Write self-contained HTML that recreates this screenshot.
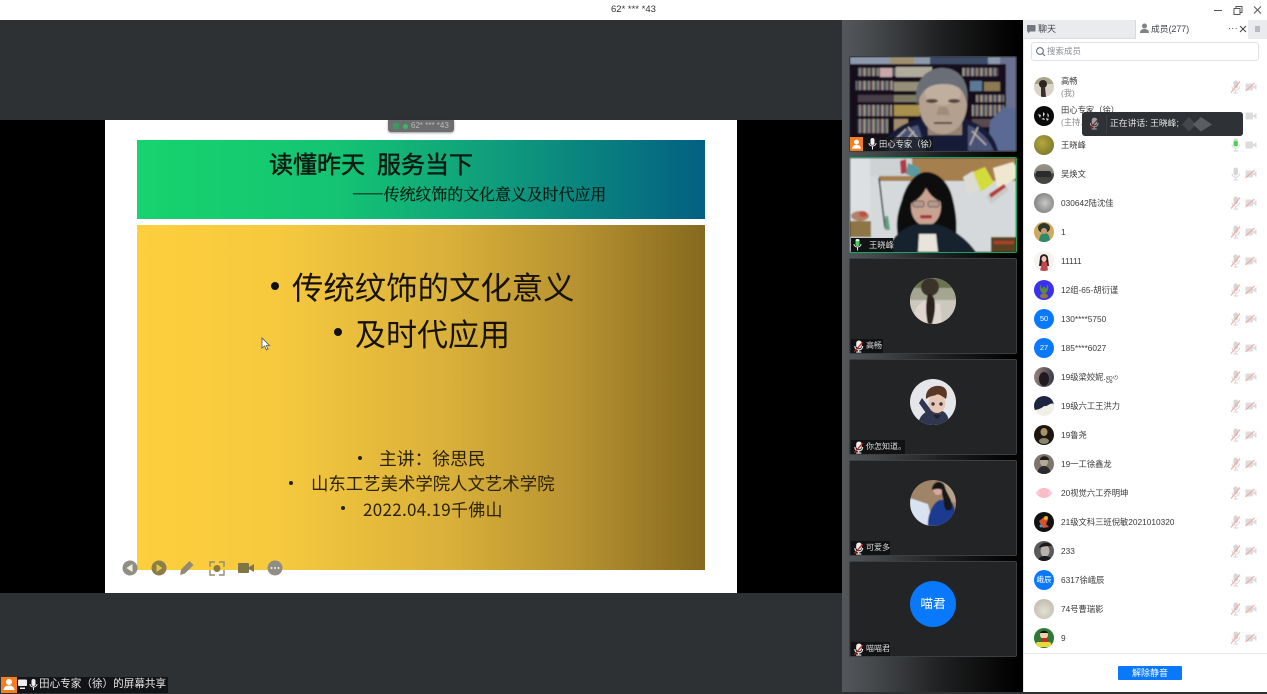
<!DOCTYPE html>
<html lang="zh"><head><meta charset="utf-8"><title>62* *** *43</title>
<style>
html,body{margin:0;padding:0;width:1267px;height:694px;overflow:hidden;background:#2e3134}
body{position:relative;font-family:"Liberation Sans","Noto Sans CJK SC",sans-serif;color:#333}
div,span,svg{position:absolute}
.t{white-space:nowrap;line-height:1}
.tile{left:849px;width:166px;height:94px;background:#222426;border:1px solid #3c3f42;border-radius:2px;overflow:hidden}
.lab{left:1px;background:#101214;height:14px;top:80px;color:#ddd;font-size:8px;line-height:14px;white-space:nowrap}
.n{left:38px;font-size:8.300px;color:#3a3a3a;white-space:nowrap;line-height:10px}
.av{left:11px;width:20px;height:20px;border-radius:50%;overflow:hidden}
.bl{background:#0a78fb;color:#fff;font-size:7.500px;text-align:center;line-height:20px}
.m{left:207px;width:11px;height:14px}
.c{left:222px;width:12px;height:10px}
</style></head><body>
<svg width="0" height="0" style="left:0;top:0">
<symbol id="mm" viewBox="0 0 11 14"><rect x="3.500" y="0.500" width="4.500" height="8" rx="2.200" fill="#d6d6d6"/><path d="M2 6.500c0 5 7.500 5 7.500 0M5.700 10.500v2M3.500 13h4.500" stroke="#d6d6d6" fill="none"/><path d="M1 12.500 10 1.500" stroke="#f7a29b" stroke-width="1"/></symbol>
<symbol id="mu" viewBox="0 0 11 14"><rect x="3.500" y="0.500" width="4.500" height="8" rx="2.200" fill="#d6d6d6"/><path d="M2 6.500c0 5 7.500 5 7.500 0M5.700 10.500v2M3.500 13h4.500" stroke="#d6d6d6" fill="none"/></symbol>
<symbol id="mg" viewBox="0 0 11 14"><rect x="3.500" y="0.500" width="4.500" height="3.500" rx="1.700" fill="#d6d6d6"/><rect x="3.500" y="3" width="4.500" height="5.500" rx="2" fill="#48d455"/><path d="M2 6.500c0 5 7.500 5 7.500 0M5.700 10.500v2M3.500 13h4.500" stroke="#d6d6d6" fill="none"/></symbol>
<symbol id="cm" viewBox="0 0 12 10"><rect x="0.500" y="1.500" width="7.500" height="7" rx="1" fill="#dcdcdc"/><path d="M8 4.500 11.500 2v6L8 5.500z" fill="#dcdcdc"/><path d="M0.500 9 9.500 1" stroke="#f7a29b"/></symbol>
<symbol id="cu" viewBox="0 0 12 10"><rect x="0.500" y="1.500" width="7.500" height="7" rx="1" fill="#dcdcdc"/><path d="M8 4.500 11.500 2v6L8 5.500z" fill="#dcdcdc"/></symbol>
<symbol id="lm" viewBox="0 0 11 14"><rect x="3" y="0.500" width="6" height="8.500" rx="3" fill="#ececec"/><path d="M1.500 6.500c0 5.500 8.500 5.500 8.500 0M5.700 10.500v2M3 13h5.500" stroke="#ececec" stroke-width="1.200" fill="none"/><path d="M1 12.500 10 2.500" stroke="#c8201c" stroke-width="1.300"/></symbol>
<symbol id="pp" viewBox="0 0 16 16"><circle cx="8" cy="5" r="3" fill="#fff"/><path d="M2.500 13c.5-3.500 3-4.500 5.500-4.500s5 1 5.500 4.500z" fill="#fff"/></symbol>
<filter id="b"><feGaussianBlur stdDeviation=".6"/></filter>
<filter id="b2"><feGaussianBlur stdDeviation=".8"/></filter>
<pattern id="books" width="9" height="10" patternUnits="userSpaceOnUse"><rect width="9" height="10" fill="#2b1c2c"/><rect x="0" width="2" height="10" fill="#8e8a7c"/><rect x="2.500" width="1.500" height="10" fill="#5a4a62"/><rect x="4.500" width="2" height="10" fill="#a69a86"/><rect x="7" width="1.500" height="10" fill="#4a5a70"/></pattern>
</svg>

<!-- title bar -->
<div style="left:0;top:0;width:1267px;height:20px;background:#fff"></div>
<div class="t" style="left:611px;top:5px;font-size:9.500px;color:#333">62* *** *43</div>
<svg style="left:1210px;top:2px" width="57" height="16" fill="none" stroke="#555"><path d="M4 8.500h8"/><path d="M24 6.500h6v6h-6zM26 6.500v-2h6v6h-2" /><path d="M44 4.500l7 7M51 4.500l-7 7"/></svg>

<!-- share area -->
<div style="left:0;top:20px;width:842px;height:672px;background:#2e3134"></div>
<div style="left:0;top:120px;width:842px;height:473px;background:#000"></div>
<div style="left:105px;top:120px;width:632px;height:473px;background:#fff"></div>
<div style="left:137px;top:140px;width:568px;height:79px;background:linear-gradient(90deg,#17d36d 0%,#14c473 35%,#0f9a7d 65%,#036082 100%)"></div>
<div style="left:137px;top:225px;width:568px;height:345px;background:linear-gradient(90deg,#fdcf3d 0%,#f6c93e 25%,#d9b03a 55%,#b69130 78%,#85691f 100%)"></div>

<div class="t" style="left:269px;top:151px;font-size:24px;word-spacing:0;-webkit-text-stroke:.5px #0d1a12;color:#0d1a12;font-family:'Noto Sans CJK SC',sans-serif">读懂昨天<span style="position:static;display:inline-block;width:12px"></span>服务当下</div>
<div class="t" style="left:352px;top:186px;font-size:15.900px;color:#06180f;-webkit-text-stroke:.3px #06180f;font-family:'Noto Serif CJK SC',serif">——传统纹饰的文化意义及时代应用</div>

<div style="left:271px;top:282px;width:8px;height:8px;border-radius:50%;background:#111"></div>
<div class="t" style="left:292px;top:271px;font-size:31.400px;color:#161208;font-family:'WenQuanYi Zen Hei','Noto Sans CJK SC',sans-serif">传统纹饰的文化意义</div>
<div style="left:334px;top:328px;width:8px;height:8px;border-radius:50%;background:#111"></div>
<div class="t" style="left:355px;top:317px;font-size:31px;color:#161208;font-family:'WenQuanYi Zen Hei','Noto Sans CJK SC',sans-serif">及时代应用</div>

<div style="left:358px;top:456px;width:4px;height:4px;border-radius:50%;background:#222"></div>
<div class="t" style="left:379px;top:450px;font-size:17.800px;color:#2b2208;font-family:'WenQuanYi Zen Hei','Noto Sans CJK SC',sans-serif">主讲：徐思民</div>
<div style="left:289px;top:481px;width:4px;height:4px;border-radius:50%;background:#222"></div>
<div class="t" style="left:311px;top:475px;font-size:17.400px;color:#2b2208;font-family:'WenQuanYi Zen Hei','Noto Sans CJK SC',sans-serif">山东工艺美术学院人文艺术学院</div>
<div style="left:341px;top:506px;width:4px;height:4px;border-radius:50%;background:#222"></div>
<div class="t" style="left:363px;top:500px;font-size:17px;letter-spacing:.300px;color:#2b2208;font-family:'WenQuanYi Zen Hei','Noto Sans CJK SC',sans-serif">2022.04.19千佛山</div>

<!-- float tag -->
<div style="left:388px;top:120px;width:66px;height:12px;background:#6c6d6e;border-radius:0 0 3px 3px;box-shadow:0 1px 2px rgba(0,0,0,.4)"></div>
<div style="left:393px;top:123px;width:6px;height:6px;background:#3d9a5d"></div>
<div style="left:403px;top:124px;width:5px;height:5px;border-radius:50%;background:#2fbf5f"></div>
<div class="t" style="left:411px;top:122px;font-size:8px;color:#b9bbbb">62* *** *43</div>

<!-- toolbar -->
<svg style="left:120px;top:558px" width="166" height="20">
<g fill="#8f8d84">
<circle cx="10" cy="10" r="7.500"/><path d="M12.500 6v8L6.500 10z" fill="#f4f0e0"/>
<circle cx="39" cy="10" r="7.500" fill="#8a7d48"/><path d="M36.500 6v8l6-4z" fill="#e6c24a"/>
<path d="M60 17l1-5.500 8.500-8.500 4 4-8.500 8.500z" fill="#908b72"/>
<path d="M90 9V4h5M99 4h5v5M104 12v5h-5M95 17h-5v-5" fill="none" stroke="#908b78" stroke-width="1.400"/><circle cx="97" cy="10.500" r="3.500" fill="#8a7a40"/>
<rect x="118" y="5" width="11" height="10" rx="1" fill="#7f7648"/><path d="M129 9l5-3v8l-5-3z" fill="#7f7648"/>
<circle cx="155" cy="10" r="7.500"/><circle cx="151.500" cy="10" r="1" fill="#eee"/><circle cx="155" cy="10" r="1" fill="#eee"/><circle cx="158.500" cy="10" r="1" fill="#eee"/>
</g></svg>

<!-- cursor -->
<svg style="left:261px;top:337px" width="10" height="14"><path d="M1 1v10l2.500-2 1.800 3.800 1.600-.8L5.200 8.500H8.500z" fill="#fff" stroke="#555" stroke-width=".8"/></svg>

<!-- bottom-left label -->
<div style="left:1px;top:677px;width:16px;height:16px;background:#f47f20"><svg style="left:0;top:0" width="16" height="16"><use href="#pp"/></svg></div>
<div style="left:17px;top:677px;width:151px;height:16px;background:#111316"></div>
<svg style="left:18px;top:679px" width="20" height="12"><rect x="0" y="0.500" width="9" height="6.500" rx="1" fill="#eee"/><rect x="2" y="8.500" width="5" height="1.500" fill="#eee"/><rect x="13.500" y="0" width="4" height="7" rx="2" fill="#eee"/><path d="M12 5c0 4 7 4 7 0M15.500 8v3" stroke="#eee" fill="none"/></svg>
<div class="t" style="left:39px;top:679px;font-size:10.600px;color:#e6e6e6">田心专家（徐）的屏幕共享</div>

<!-- strip -->
<div style="left:842px;top:20px;width:181px;height:672px;background:linear-gradient(90deg,#54575b 0%,#45484b 18%,#1f2021 55%,#050505 90%,#000 100%)"></div>

<!-- tile 1 -->
<div class="tile" style="top:56px">
<svg style="left:0;top:0" width="166" height="94" viewBox="0 0 166 94">
<g filter="url(#b2)">
<rect width="166" height="94" fill="#6a7090"/>
<rect x="0" y="0" width="150" height="7" fill="#8d99ad"/>
<rect x="40" y="0" width="24" height="7" fill="#a09070"/><rect x="80" y="0" width="58" height="7" fill="#3e4c68"/>
<rect x="0" y="7" width="156" height="87" fill="#190d1b"/>
<rect x="8" y="11" width="40" height="8" fill="url(#books)"/><rect x="30" y="11" width="12" height="9" fill="#c8a8a8"/>
<rect x="46" y="10" width="36" height="10" fill="#b0ac9c"/><rect x="112" y="11" width="36" height="8" fill="url(#books)"/>
<rect x="6" y="24" width="38" height="9" fill="url(#books)"/><rect x="44" y="25" width="28" height="9" fill="#958f7a"/>
<rect x="120" y="24" width="12" height="10" fill="#5c7a96"/><rect x="134" y="25" width="16" height="9" fill="#8d7a52"/>
<rect x="8" y="38" width="36" height="7" fill="#4a3c46"/><rect x="44" y="38" width="26" height="7" fill="#7e7a64"/><rect x="126" y="38" width="28" height="7" fill="url(#books)"/>
<rect x="8" y="48" width="34" height="11" fill="url(#books)"/><rect x="44" y="48" width="26" height="11" fill="#a8904e"/><rect x="122" y="48" width="32" height="11" fill="url(#books)"/>
<rect x="8" y="62" width="30" height="14" fill="url(#books)"/><rect x="44" y="62" width="14" height="12" fill="#a08a6a"/><rect x="122" y="62" width="30" height="8" fill="#5a4a50"/>
<path d="M138 94l2-30 14-14 12 2v42z" fill="#5a6a94"/>
<path d="M30 94c6-18 22-28 40-32h44c16 4 30 14 34 32z" fill="#161e38"/>
<path d="M38 94c3-12 14-22 30-26l8 26zM118 68c10 4 20 12 26 26h-26z" fill="#4a5278"/>
<path d="M42 86l14-14M50 92l14-18M58 70l10 12M122 74l14 14M128 70l-8 18" stroke="#c2b8ac" stroke-width="1.400"/>
<rect x="78" y="60" width="34" height="18" fill="#968272"/>
<ellipse cx="93" cy="47" rx="24" ry="30" fill="#b3a08f"/>
<ellipse cx="93" cy="36" rx="18" ry="12" fill="#c0af9e"/>
<path d="M67 48c-5-28 14-38 27-37 16 1 26 14 23 36-3-14-8-20-24-20-15 0-22 7-26 21z" fill="#6b6e76"/>
<ellipse cx="82" cy="44" rx="6" ry="2" fill="#55443c"/><ellipse cx="104" cy="44" rx="6" ry="2" fill="#55443c"/>
<path d="M89 50h8l3 8h-14z" fill="#a08c7c"/><rect x="84" y="65" width="18" height="2" fill="#5c4840"/>
</g></svg>
<div style="left:0;top:80px;width:13px;height:14px;background:#f47f20"><svg style="left:0;top:1px" width="13" height="13"><use href="#pp"/></svg></div>
<div class="lab" style="left:13px;top:80px;width:70px;background:rgba(20,22,24,.72);padding-left:16px;color:#e4e4e4;box-sizing:border-box;font-size:8.300px">田心专家（徐）</div>
<svg style="left:18px;top:81px" width="9" height="12"><rect x="2.500" y="0" width="4" height="7" rx="2" fill="#eee"/><path d="M1 5c0 4 7 4 7 0M4.500 8.500v3" stroke="#eee" fill="none"/></svg>
</div>

<!-- tile 2 -->
<div class="tile" style="top:157px;border-color:#16a564">
<svg style="left:0;top:0" width="166" height="94" viewBox="0 0 166 94"><g filter="url(#b2)">
<rect width="166" height="94" fill="#d5d9dc"/>
<rect x="29" y="0" width="137" height="23" fill="#a57f4e"/>
<rect x="0" y="0" width="20" height="94" fill="#dce0e2"/>
<rect x="20" y="0" width="42" height="18" fill="#cfd2d4"/>
<path d="M50 3l6-2 1 14-6 1z" fill="#b03a42"/><path d="M58 5l12 5-2 11-12-5z" fill="#5a9aa0"/>
<path d="M29 20l6 50" stroke="#26303a" stroke-width="1.500"/>
<path d="M35 58l3 0 2 14-5 0z" fill="#5aa080"/>
<rect x="0" y="63" width="21" height="16" fill="#8d7444"/><rect x="0" y="79" width="24" height="15" fill="#cfd2d4"/><ellipse cx="10" cy="58" rx="9" ry="5" fill="#b08068"/><ellipse cx="13" cy="56" rx="4" ry="3" fill="#c05040"/>
<path d="M113 19l10-6 7 18-12 6z" fill="#dcdcd4"/>
<path d="M143 10l20-6 3 4v12l-18 12z" fill="#efe8d0"/>
<path d="M123 14l12-5 9 16-13 9z" fill="#d4dc3c"/><path d="M136 38l18-12 5 6-18 14z" fill="#c8cac6"/><path d="M139 36l15-10 2 3-15 11z" fill="#b83a3a"/>
<rect x="141" y="79" width="25" height="15" fill="#5a4224"/><rect x="144" y="83" width="20" height="3" fill="#b0402c"/>
<path d="M50 94c-3-22-6-30 2-52 4-16 14-28 24-28 13 0 24 12 27 28 5 20 4 34 1 52z" fill="#0e0d10"/>
<ellipse cx="76" cy="49" rx="15" ry="19" fill="#c9a392"/>
<path d="M60 46c0-12 8-20 18-20 10 0 14 8 14 18-7-2-12-7-16-14-3 7-8 12-16 16z" fill="#0e0d10"/>
<rect x="63" y="43" width="11" height="6" rx="2" fill="#b4998c" stroke="#4a4a4a" stroke-width=".8"/><rect x="78" y="43" width="11" height="6" rx="2" fill="#b4998c" stroke="#4a4a4a" stroke-width=".8"/>
<rect x="70" y="57" width="12" height="3.500" rx="1.700" fill="#a8343a"/>
<path d="M38 94c2-14 14-24 28-28h20c16 4 30 14 40 28z" fill="#15202e"/>
<path d="M69 76h17l2 18H68z" fill="#e8e4dc"/>
</g></svg>
<div class="lab" style="width:42px;padding-left:18px;box-sizing:border-box;font-size:8.300px">王晓峰</div>
<svg style="left:3px;top:81px" width="9" height="12"><rect x="2.500" y="0" width="4" height="3" rx="1.500" fill="#eee"/><rect x="2.500" y="2" width="4" height="5" rx="1.500" fill="#3fd65a"/><path d="M1 5c0 4 7 4 7 0M4.500 8.500v3" stroke="#eee" fill="none"/></svg>
</div>

<!-- tile 3 -->
<div class="tile" style="top:258px">
<div style="left:60px;top:19px;width:46px;height:46px;border-radius:50%;overflow:hidden;background:#cfcabd">
<svg style="left:0;top:0" width="46" height="46"><g filter="url(#b)"><rect width="46" height="12" fill="#6c7550"/><rect y="10" width="46" height="12" fill="#a4a690"/><rect y="22" width="46" height="24" fill="#cdc8be"/><path d="M4 46c-2-14 6-22 12-24l14 4 2 20z" fill="#e0d6d0"/><ellipse cx="20" cy="9" rx="9" ry="9" fill="#3a302c"/><path d="M18 16c6 0 7 6 7 12 0 8-2 14-3 18h-4c-2-8-3-20 0-30z" fill="#2b211f"/></g></svg></div>
<div class="lab" style="width:32px;padding-left:15px;box-sizing:border-box">高畅</div>
<svg style="left:3px;top:81px" width="11" height="13"><use href="#lm"/></svg>
</div>

<!-- tile 4 -->
<div class="tile" style="top:359px">
<div style="left:60px;top:19px;width:46px;height:46px;border-radius:50%;overflow:hidden;background:#e4e6ea">
<svg style="left:0;top:0" width="46" height="46"><path d="M8 46c1-10 8-14 14-15l8 0c6 2 9 6 9 15z" fill="#2e3650"/><path d="M16 34l-7-10 3-5 9 12z" fill="#2e3650"/><ellipse cx="27" cy="24" rx="8.500" ry="10" fill="#e8c8b4"/><path d="M16 20c-1-11 8-14 14-13 7 1 8 7 6 13-4-3-8-6-10-4-3 1-6 1-10 4z" fill="#5a3826"/><circle cx="23" cy="25" r="1.700" fill="#334"/><circle cx="31" cy="25" r="1.700" fill="#334"/><path d="M23 36l4 4 4-4" fill="#222"/></svg></div>
<div class="lab" style="width:54px;padding-left:15px;box-sizing:border-box">你怎知道。</div>
<svg style="left:3px;top:81px" width="11" height="13"><use href="#lm"/></svg>
</div>

<!-- tile 5 -->
<div class="tile" style="top:460px">
<div style="left:60px;top:19px;width:46px;height:46px;border-radius:50%;overflow:hidden;background:#a08468">
<svg style="left:0;top:0" width="46" height="46"><g filter="url(#b)"><path d="M0 18l18 6 6 22H0z" fill="#d8e2f0"/><path d="M30 0h16v22H34z" fill="#b8a48a"/><path d="M18 46c-1-12 6-24 12-26h8c6 3 8 10 8 26z" fill="#1f3a90"/><ellipse cx="28" cy="9" rx="5" ry="6" fill="#d8a8a0"/><path d="M22 10c0-9 11-11 13-3 2 8 8 12 7 22-4 3-8 1-8-5 0-6-3-12-2-14-3-2-7-1-10 0z" fill="#181216"/></g></svg></div>
<div class="lab" style="width:39px;padding-left:15px;box-sizing:border-box">可爱多</div>
<svg style="left:3px;top:81px" width="11" height="13"><use href="#lm"/></svg>
</div>

<!-- tile 6 -->
<div class="tile" style="top:561px">
<div style="left:60px;top:19px;width:46px;height:46px;border-radius:50%;background:#0a78fb;color:#fff;font-size:12.500px;text-align:center;line-height:46px">喵君</div>
<div class="lab" style="width:39px;padding-left:15px;box-sizing:border-box">喵喵君</div>
<svg style="left:3px;top:81px" width="11" height="13"><use href="#lm"/></svg>
</div>

<!-- panel -->
<div style="left:1023px;top:20px;width:244px;height:672px;background:#fff;overflow:hidden">
  <div style="left:0;top:0;width:1px;height:672px;background:#e4e4e4"></div>
  <div style="left:0;top:0;width:113px;height:19px;background:#e9ebef;border-bottom:1px solid #dcdde2;box-sizing:border-box"></div>
  <div style="left:112px;top:0;width:1px;height:19px;background:#d8d9dd"></div>
  <div style="left:225px;top:0;width:19px;height:19px;background:#e9ebef"></div>
  <div style="left:232px;top:6px;width:5px;height:6px;background:#b8bac0"></div>
  <svg style="left:3px;top:4px" width="11" height="11"><path d="M1 1h8.500v6.500H4L2 9.500v-2H1z" fill="#74777d"/></svg>
  <div class="t" style="left:15px;top:4.500px;font-size:9px;color:#3e4046">聊天</div>
  <svg style="left:116px;top:3px" width="11" height="11"><circle cx="5.500" cy="3" r="2.500" fill="#7f8289"/><path d="M1 10c0-3 2-4 4.500-4s4.500 1 4.500 4z" fill="#7f8289"/></svg>
  <div class="t" style="left:128px;top:4.500px;font-size:8.800px;color:#3e4046">成员(277)</div>
  <div class="t" style="left:205px;top:4px;font-size:9px;color:#333;letter-spacing:.300px">···</div>
  <svg style="left:216px;top:5px" width="8" height="8"><path d="M1 1l6 6M7 1l-6 6" stroke="#444"/></svg>

  <div style="left:8px;top:22px;width:228px;height:19px;border:1px solid #dfe2ea;border-radius:3px;box-sizing:border-box"></div>
  <svg style="left:12px;top:26px" width="11" height="11" fill="none" stroke="#5a6470"><circle cx="5" cy="5" r="3.400"/><path d="M7.500 7.500l2.500 2.500"/></svg>
  <div class="t" style="left:24px;top:26.500px;font-size:8.500px;color:#8c8f96">搜索成员</div>

  <!-- rows -->
  <div class="av" style="top:57px;background:#d8d3c6"><svg style="left:0;top:0" width="20" height="20"><rect width="20" height="7" fill="#a8a68a"/><ellipse cx="9" cy="7" rx="4" ry="4" fill="#2e2522"/><path d="M7 10h4l1 10H7z" fill="#3a2f2b"/></svg></div>
  <div class="n" style="top:56px">高畅</div><div class="n" style="top:68px;color:#8c8c8c">(我)</div>
  <svg class="m" style="top:60px"><use href="#mm"/></svg><svg class="c" style="top:62px"><use href="#cm"/></svg>

  <div class="av" style="top:86px;background:#0a0a0a"><svg style="left:0;top:0" width="20" height="20"><path d="M4 8l3 1-1 3zM9 6l2 2-2 3zM13 7l2 2-1 3zM7 13l3-1 1 2zM12 12l3 1-2 2z" fill="#d8d8d8"/></svg></div>
  <div class="n" style="top:85px">田心专家（徐）</div><div class="n" style="top:97px;color:#8c8c8c">(主持人</div>
  <svg class="c" style="top:91px"><use href="#cu"/></svg>

  <div class="av" style="top:115px;background:radial-gradient(circle at 40% 40%,#b8a83a,#6a6a2a)"></div>
  <div class="n" style="top:120px">王晓峰</div>
  <svg class="m" style="top:118px"><use href="#mg"/></svg><svg class="c" style="top:120px"><use href="#cu"/></svg>

  <div class="av" style="top:144px;background:linear-gradient(#9a9488 0,#8a857a 45%,#3c3d3a 50%,#4a4a46 100%)"><svg style="left:0;top:0" width="20" height="20"><rect x="2" y="7" width="15" height="6" rx="2" fill="#2a2c2a"/></svg></div>
  <div class="n" style="top:149px">吴焕文</div>
  <svg class="m" style="top:147px"><use href="#mu"/></svg><svg class="c" style="top:149px"><use href="#cm"/></svg>

  <div class="av" style="top:173px;background:radial-gradient(circle at 55% 50%,#c8c8c8,#6a6a68)"></div>
  <div class="n" style="top:178px">030642陆沈佳</div>
  <svg class="m" style="top:176px"><use href="#mm"/></svg><svg class="c" style="top:178px"><use href="#cm"/></svg>

  <div class="av" style="top:202px;background:#d0a860"><svg style="left:0;top:0" width="20" height="20"><ellipse cx="10" cy="6" rx="6" ry="5" fill="#2c3a2a"/><path d="M5 20c0-7 3-9 6-9s5 3 5 9z" fill="#2f8a6a"/><ellipse cx="10" cy="9" rx="3" ry="3" fill="#c89878"/></svg></div>
  <div class="n" style="top:207px">1</div>
  <svg class="m" style="top:205px"><use href="#mm"/></svg><svg class="c" style="top:207px"><use href="#cm"/></svg>

  <div class="av" style="top:231px;background:#f6f2f0"><svg style="left:0;top:0" width="20" height="20"><path d="M6 7c0-5 8-5 8 0l1 8H5z" fill="#2a1a1e"/><ellipse cx="10" cy="8" rx="2.500" ry="3" fill="#eec8c0"/><path d="M6 20l2-9h5l1 9z" fill="#c04a4a"/></svg></div>
  <div class="n" style="top:236px">11111</div>
  <svg class="m" style="top:234px"><use href="#mm"/></svg><svg class="c" style="top:236px"><use href="#cm"/></svg>

  <div class="av" style="top:260px;background:#3a30f0"><svg style="left:0;top:0" width="20" height="20"><path d="M6 4c-1 6 1 9 4 10 3-1 5-4 4-10l-2 5-2-3-2 3z" fill="#5a8a3a"/><ellipse cx="10" cy="16" rx="4" ry="2.500" fill="#8a7a3a"/></svg></div>
  <div class="n" style="top:265px">12组-65-胡衍谨</div>
  <svg class="m" style="top:263px"><use href="#mm"/></svg><svg class="c" style="top:265px"><use href="#cm"/></svg>

  <div class="av bl" style="top:289px">50</div>
  <div class="n" style="top:294px">130****5750</div>
  <svg class="m" style="top:292px"><use href="#mm"/></svg><svg class="c" style="top:294px"><use href="#cm"/></svg>

  <div class="av bl" style="top:318px">27</div>
  <div class="n" style="top:323px">185****6027</div>
  <svg class="m" style="top:321px"><use href="#mm"/></svg><svg class="c" style="top:323px"><use href="#cm"/></svg>

  <div class="av" style="top:347px;background:linear-gradient(100deg,#a08880,#2e3448)"><svg style="left:0;top:0" width="20" height="20"><ellipse cx="10" cy="12" rx="5" ry="7" fill="#221a1e"/></svg></div>
  <div class="n" style="top:352px">19级梁姣妮.ஜ৩</div>
  <svg class="m" style="top:350px"><use href="#mm"/></svg><svg class="c" style="top:352px"><use href="#cm"/></svg>

  <div class="av" style="top:376px;background:#f0f0e6"><svg style="left:0;top:0" width="20" height="20"><path d="M0 0h20v8c-4-2-6 3-10 2-2 2-6 4-10 4z" fill="#1e2540"/></svg></div>
  <div class="n" style="top:381px">19级六工王洪力</div>
  <svg class="m" style="top:379px"><use href="#mm"/></svg><svg class="c" style="top:381px"><use href="#cm"/></svg>

  <div class="av" style="top:405px;background:#1c160e"><svg style="left:0;top:0" width="20" height="20"><ellipse cx="10" cy="7" rx="3.500" ry="4" fill="#a89068"/><ellipse cx="10" cy="16" rx="5" ry="3" fill="#8a8470"/></svg></div>
  <div class="n" style="top:410px">19鲁尧</div>
  <svg class="m" style="top:408px"><use href="#mm"/></svg><svg class="c" style="top:410px"><use href="#cm"/></svg>

  <div class="av" style="top:434px;background:#7c756c"><svg style="left:0;top:0" width="20" height="20"><ellipse cx="10" cy="8" rx="4" ry="4.500" fill="#b8a898"/><path d="M6 6c0-5 9-5 9 0z" fill="#1e1c1c"/><path d="M3 20c1-6 4-8 7-8s6 2 7 8z" fill="#2c2a2a"/></svg></div>
  <div class="n" style="top:439px">19一工徐鑫龙</div>
  <svg class="m" style="top:437px"><use href="#mm"/></svg><svg class="c" style="top:439px"><use href="#cm"/></svg>

  <div class="av" style="top:463px;background:#fff"><svg style="left:0;top:0" width="20" height="20"><ellipse cx="10" cy="10" rx="7" ry="5" fill="#f8bcc8"/><circle cx="4" cy="10" r="2" fill="#f8ccd6"/><circle cx="16" cy="10" r="2" fill="#f8ccd6"/></svg></div>
  <div class="n" style="top:468px">20视觉六工乔明坤</div>
  <svg class="m" style="top:466px"><use href="#mm"/></svg><svg class="c" style="top:468px"><use href="#cm"/></svg>

  <div class="av" style="top:492px;background:#111"><svg style="left:0;top:0" width="20" height="20"><path d="M5 9l5-4 4 3-2 4 3 3-6 1-2-3z" fill="#d8502c"/><circle cx="12" cy="6" r="2" fill="#e8b030"/><circle cx="7" cy="14" r="1.500" fill="#3aa0c0"/></svg></div>
  <div class="n" style="top:497px">21级文科三班倪敏2021010320</div>
  <svg class="m" style="top:495px"><use href="#mm"/></svg><svg class="c" style="top:497px"><use href="#cm"/></svg>

  <div class="av" style="top:521px;background:#5a5a5c"><svg style="left:0;top:0" width="20" height="20"><ellipse cx="11" cy="10" rx="4.500" ry="6" fill="#b8b0aa"/><path d="M5 7c1-6 11-7 13-2-4 0-9 0-13 2z" fill="#1a1a1c"/><path d="M3 20c2-4 5-5 8-5s6 1 7 5z" fill="#1a1a1c"/></svg></div>
  <div class="n" style="top:526px">233</div>
  <svg class="m" style="top:524px"><use href="#mm"/></svg><svg class="c" style="top:526px"><use href="#cm"/></svg>

  <div class="av bl" style="top:550px">峨辰</div>
  <div class="n" style="top:555px">6317徐峨辰</div>
  <svg class="m" style="top:553px"><use href="#mm"/></svg><svg class="c" style="top:555px"><use href="#cm"/></svg>

  <div class="av" style="top:579px;background:radial-gradient(circle at 50% 60%,#e4dfd4,#b8b2a4)"></div>
  <div class="n" style="top:584px">74号曹瑞影</div>
  <svg class="m" style="top:582px"><use href="#mm"/></svg><svg class="c" style="top:584px"><use href="#cm"/></svg>

  <div class="av" style="top:608px;background:#2e7a34"><svg style="left:0;top:0" width="20" height="20"><circle cx="10" cy="7" r="4" fill="#f0d0b0"/><path d="M6 5c1-3 7-3 8 0z" fill="#111"/><rect x="7" y="10" width="6" height="4" fill="#c03028"/><rect x="2" y="14" width="15" height="5" rx="2" fill="#e8d83a"/></svg></div>
  <div class="n" style="top:613px">9</div>
  <svg class="m" style="top:611px"><use href="#mm"/></svg><svg class="c" style="top:613px"><use href="#cm"/></svg>

  <div style="left:0;top:633px;width:244px;height:1px;background:#e8e8e8"></div>
  <div style="left:95px;top:646px;width:64px;height:14px;background:#0a78fb;border-radius:1px;color:#fff;font-size:9px;line-height:14px;text-align:center">解除静音</div>
</div>

<!-- tooltip -->
<div style="left:1082px;top:112px;width:161px;height:24px;background:#2e3135;border-radius:3px"></div>
<div style="left:1106px;top:114px;width:1px;height:20px;background:#3c3f44"></div>
<svg style="left:1089px;top:117px;opacity:.6" width="10" height="13"><use href="#lm"/></svg>
<div class="t" style="left:1110px;top:119px;font-size:8.800px;color:#e2e2e2">正在讲话: 王晓峰;</div>
<svg style="left:1182px;top:116px" width="32" height="17"><path d="M0 8.500 7 1l7 7.500-7 7z" fill="#44474b"/><path d="M11 8.500 19 1l11 7.500-11 7z" fill="#5a5d61"/></svg>
</body></html>
